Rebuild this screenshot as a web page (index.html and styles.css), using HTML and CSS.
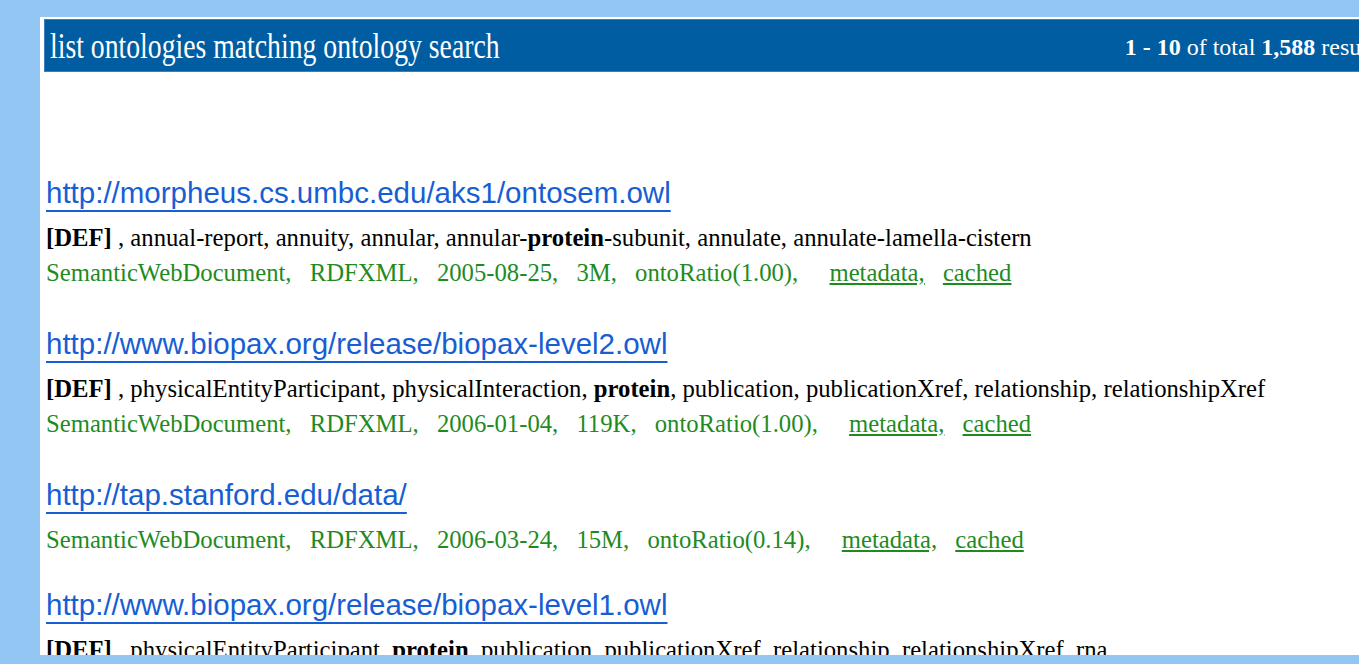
FILE: index.html
```html
<!DOCTYPE html>
<html lang="en">
<head>
<meta charset="utf-8">
<title>Ontology search</title>
<link rel="stylesheet" href="styles.css">
</head>
<body>
<div class="page">
  <div class="bar">
    <span class="title">list ontologies matching ontology search</span>
    <span class="count"><b>1 - 10</b> of total <b>1,588</b> results</span>
  </div>
  <div class="results">
    <div class="hit">
      <a class="url" href="#">http://morpheus.cs.umbc.edu/aks1/ontosem.owl</a>
      <div class="terms"><b>[DEF]</b> , annual-report, annuity, annular, annular-<b>protein</b>-subunit, annulate, annulate-lamella-cistern</div>
      <div class="meta">SemanticWebDocument, RDFXML, 2005-08-25, 3M, ontoRatio(1.00), <a class="more" href="#">metadata,</a> <a href="#">cached</a></div>
    </div>
    <div class="hit">
      <a class="url" href="#">http://www.biopax.org/release/biopax-level2.owl</a>
      <div class="terms"><b>[DEF]</b> , physicalEntityParticipant, physicalInteraction, <b>protein</b>, publication, publicationXref, relationship, relationshipXref</div>
      <div class="meta">SemanticWebDocument, RDFXML, 2006-01-04, 119K, ontoRatio(1.00), <a class="more" href="#">metadata,</a> <a href="#">cached</a></div>
    </div>
    <div class="hit bare">
      <a class="url" href="#">http://tap.stanford.edu/data/</a>
      <div class="meta">SemanticWebDocument, RDFXML, 2006-03-24, 15M, ontoRatio(0.14), <a class="more" href="#">metadata,</a> <a href="#">cached</a></div>
    </div>
    <div class="hit">
      <a class="url" href="#">http://www.biopax.org/release/biopax-level1.owl</a>
      <div class="terms"><b>[DEF]</b> , physicalEntityParticipant, <b>protein</b>, publication, publicationXref, relationship, relationshipXref, rna</div>
      <div class="meta">SemanticWebDocument, RDFXML, 2006-01-04, 97K, ontoRatio(1.00), <a class="more" href="#">metadata,</a> <a href="#">cached</a></div>
    </div>
  </div>
</div>
</body>
</html>
```

FILE: styles.css
```css
html, body {
  margin: 0;
}

body {
  background: #94c6f4;
  overflow: hidden;
  padding: 17px 0 0 40px;
  font-family: "Liberation Serif", "Times New Roman", serif;
  color: #000;
}

/* white sheet holding the result list */
.page {
  width: 1360px;
  height: 638px;
  box-sizing: border-box;
  padding: 2px 0 0 4px;
  background: #fff;
  overflow: hidden;
}

/* title bar */
.bar {
  height: 53px;
  box-sizing: border-box;
  border: 1px solid #3d7db8;
  background: #005da1;
  color: #fff;
  display: flex;
  align-items: center;
  justify-content: space-between;
  padding: 0 15px 0 5px;
  white-space: nowrap;
}

.title {
  display: inline-block;
  font-size: 36px;
  transform: scaleX(0.77);
  transform-origin: 0 50%;
}

.count {
  font-size: 24px;
  margin-top: 3px;
}

/* result entries */
.results {
  padding: 101px 0 0 2px;
}

.hit {
  margin-bottom: 34px;
}

.hit.bare {
  margin-bottom: 28px;
}

.url {
  display: block;
  width: fit-content;
  margin-bottom: 7px;
  font-family: "Liberation Sans", Arial, sans-serif;
  font-size: 29.5px;
  line-height: 40px;
  color: #175ed4;
  text-decoration: underline;
  text-decoration-thickness: 2px;
  text-underline-offset: 7px;
}

.terms {
  font-size: 24.7px;
  line-height: 35px;
  white-space: nowrap;
}

.meta {
  font-size: 24.7px;
  line-height: 35px;
  color: #1f8b1f;
  word-spacing: 12px;
  white-space: nowrap;
}

.meta a {
  color: #1f8b1f;
  word-spacing: 0;
}

.meta .more {
  margin-left: 13px;
}
```
